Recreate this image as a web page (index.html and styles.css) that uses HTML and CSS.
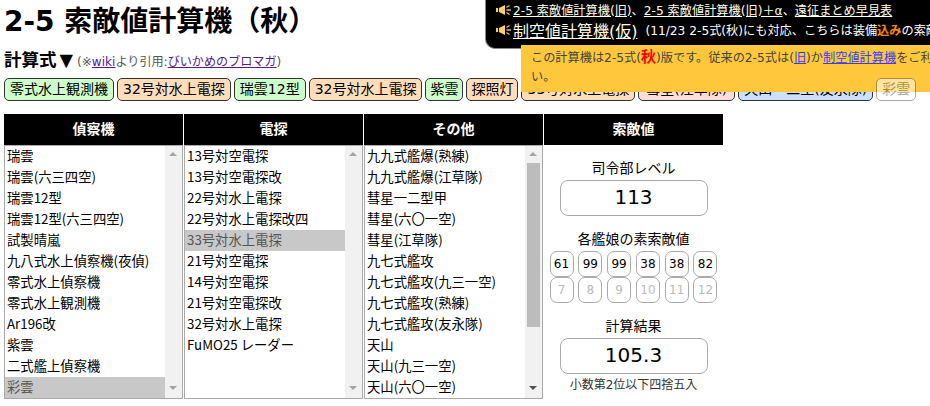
FILE: index.html
```html
<!DOCTYPE html>
<html lang="ja">
<head>
<meta charset="utf-8">
<title>2-5 索敵値計算機（秋）</title>
<link rel="stylesheet" href="styles.css">
</head>
<body>
<h1 class="title">2-5 索敵値計算機（秋）</h1>
<aside class="notice">
  <p class="notice-row"><svg class="horn" viewBox="0 0 15 10"><path d="M0 3h2v4H0zM3 3l6-3v10L3 7z"/><path class="wave" d="M10.500 2.500l3-2M10.500 5H15M10.500 7.500l3 2"/></svg><a href="#" class="notice-link">2-5 索敵値計算機(旧)</a>、<a href="#" class="notice-link">2-5 索敵値計算機(旧)＋α</a>、<a href="#" class="notice-link">遠征まとめ早見表</a></p>
  <p class="notice-row notice-row-big"><svg class="horn" viewBox="0 0 15 10"><path d="M0 3h2v4H0zM3 3l6-3v10L3 7z"/><path class="wave" d="M10.500 2.500l3-2M10.500 5H15M10.500 7.500l3 2"/></svg><a href="#" class="notice-link notice-link-big">制空値計算機(仮)</a><span class="notice-note">(11/23 2-5式(秋)にも対応、こちらは装備<b class="orange">込み</b>の索敵値を計算できます)</span></p>
</aside>
<div class="banner">この計算機は2-5式(<b class="red">秋</b>)版です。従来の2-5式は(<a href="#">旧</a>)か<a href="#">制空値計算機</a>をご利用くださ<br>い。</div>
<h2 class="formula">計算式<span class="tri">▼</span><small class="cite">(※<a href="#" class="visited">wiki</a>より引用:<a href="#" class="visited">びいかめのブロマガ</a>)</small></h2>
<div class="chips">
  <span class="chip green">零式水上観測機</span>
  <span class="chip orange-bg">32号対水上電探</span>
  <span class="chip green">瑞雲12型</span>
  <span class="chip orange-bg">32号対水上電探</span>
  <span class="chip green tight">紫雲</span>
  <span class="chip orange-bg tight">探照灯</span>
  <span class="chip orange-bg">33号対水上電探</span>
  <span class="chip pink wide">彗星(江草隊)</span>
  <span class="chip blue">天山一二型(友永隊)</span>
  <span class="chip off">彩雲</span>
</div>
<main class="board">
  <section class="col">
    <h3 class="col-head">偵察機</h3>
    <div class="list">
      <ul class="items">
        <li>瑞雲</li><li>瑞雲(六三四空)</li><li>瑞雲12型</li><li>瑞雲12型(六三四空)</li><li>試製晴嵐</li><li>九八式水上偵察機(夜偵)</li><li>零式水上偵察機</li><li>零式水上観測機</li><li>Ar196改</li><li>紫雲</li><li>二式艦上偵察機</li><li class="sel">彩雲</li>
      </ul>
      <div class="bar"><i class="up"></i><i class="track"></i><i class="down"></i></div>
    </div>
  </section>
  <section class="col">
    <h3 class="col-head">電探</h3>
    <div class="list">
      <ul class="items">
        <li>13号対空電探</li><li>13号対空電探改</li><li>22号対水上電探</li><li>22号対水上電探改四</li><li class="sel">33号対水上電探</li><li>21号対空電探</li><li>14号対空電探</li><li>21号対空電探改</li><li>32号対水上電探</li><li>FuMO25 レーダー</li>
      </ul>
      <div class="bar"><i class="up"></i><i class="track"></i><i class="down"></i></div>
    </div>
  </section>
  <section class="col">
    <h3 class="col-head">その他</h3>
    <div class="list">
      <ul class="items">
        <li>九九式艦爆(熟練)</li><li>九九式艦爆(江草隊)</li><li>彗星一二型甲</li><li>彗星(六〇一空)</li><li>彗星(江草隊)</li><li>九七式艦攻</li><li>九七式艦攻(九三一空)</li><li>九七式艦攻(熟練)</li><li>九七式艦攻(友永隊)</li><li>天山</li><li>天山(九三一空)</li><li>天山(六〇一空)</li>
      </ul>
      <div class="bar"><i class="up"></i><i class="track"><b class="thumb"></b></i><i class="down active"></i></div>
    </div>
  </section>
  <section class="col">
    <h3 class="col-head">索敵値</h3>
    <div class="calc">
      <div class="label">司令部レベル</div>
      <div class="big-box">113</div>
      <div class="label label-ships">各艦娘の素索敵値</div>
      <div class="ships">
        <span class="ship">61</span><span class="ship">99</span><span class="ship">99</span><span class="ship">38</span><span class="ship">38</span><span class="ship">82</span>
        <span class="ship dim">7</span><span class="ship dim">8</span><span class="ship dim">9</span><span class="ship dim">10</span><span class="ship dim">11</span><span class="ship dim">12</span>
      </div>
      <div class="label label-result">計算結果</div>
      <div class="big-box">105.3</div>
      <div class="foot">小数第2位以下四捨五入</div>
    </div>
  </section>
</main>
</body>
</html>
```
FILE: styles.css
```css
html, body { overflow: hidden; }
body {
  margin: 0;
  padding: 0 4px;
  width: 930px;
  height: 406px;
  box-sizing: border-box;
  position: relative;
  background: #fff;
  color: #000;
  font-family: "DejaVu Sans", "Noto Sans CJK JP", sans-serif;
  font-size: 14px;
}
.title {
  margin: 0;
  height: 44px;
  font-size: 28px;
  line-height: 44px;
  font-weight: bold;
  white-space: nowrap;
}
.notice {
  position: absolute;
  left: 485px;
  right: 0;
  top: -2px;
  height: 51px;
  box-sizing: border-box;
  overflow: hidden;
  background: #000;
  border: 1px solid #888;
  border-width: 0 0 1px 1px;
  border-radius: 0 0 0 10px;
  padding: 3px 0 0 10px;
  color: #fff;
  font-size: 12.2px;
  white-space: nowrap;
}
.notice-row { margin: 0; display: flex; align-items: center; height: 18px; }
.notice-row-big { height: 22px; }
.horn { width: 15px; height: 10px; margin-right: 2px; flex: none; fill: #ffd060; stroke: none; }
.horn .wave { fill: none; stroke: #e0b868; stroke-width: 1.3; }
.notice-link { color: #ffffe8; }
.notice-link-big { font-size: 16px; }
.notice-note { margin-left: 8px; }
.orange { color: #ff8c00; }
.banner {
  position: absolute;
  left: 521px;
  right: 0;
  top: 45px;
  height: 47px;
  box-sizing: border-box;
  overflow: hidden;
  padding: 4px 0 0 10px;
  background: #ffc83c;
  color: #444;
  font-size: 12.2px;
  line-height: 19px;
  white-space: nowrap;
}
.banner a { color: #3a3aff; }
.red { color: #f00; font-size: 15px; line-height: 15px; }
.formula {
  margin: 0;
  height: 34px;
  padding-top: 3px;
  box-sizing: border-box;
  font-size: 17.5px;
  line-height: 26px;
  font-weight: bold;
  white-space: nowrap;
}
.tri { margin-left: 3px; }
.cite { margin-left: 4px; font-size: 12.1px; font-weight: normal; color: #555; }
.visited { color: #551a8b; }
.chips { display: flex; gap: 3px; height: 23px; white-space: nowrap; }
.chip {
  box-sizing: border-box;
  height: 23px;
  padding: 0 5px;
  border: 1px solid #333;
  border-radius: 5px;
  line-height: 20px;
  font-size: 14px;
}
.tight { padding: 0 4px; }
.wide { padding: 0 7px; }
.green { background: #ccffcc; }
.orange-bg { background: #ffddbb; }
.pink { background: #ffdddd; }
.blue { background: #cce0ff; }
.off { position: relative; opacity: .5; background: #fff; color: #555; border-color: #555; }
.board {
  display: grid;
  grid-template-columns: repeat(4, 179px);
  gap: 1px;
  margin-top: 13px;
}
.col-head {
  margin: 0;
  height: 31px;
  background: #000;
  color: #fff;
  font-size: 14px;
  line-height: 31px;
  text-align: center;
}
.list {
  display: flex;
  height: 254px;
  box-sizing: border-box;
  border: 1px solid #aaa;
}
.items { flex: 1; margin: 0; padding: 0; list-style: none; overflow: hidden; }
.items li {
  height: 21px;
  line-height: 19px;
  padding-left: 2px;
  white-space: nowrap;
  font-family: "Noto Sans CJK JP", "DejaVu Sans", sans-serif;
  font-size: 13.333px;
  color: #000;
}
.items .sel { background: #c8c8c8; color: #555; }
.bar { width: 17px; flex: none; background: #f1f1f1; display: flex; flex-direction: column; align-items: center; }
.up, .down { flex: none; width: 17px; height: 17px; position: relative; }
.up::after, .down::after {
  content: "";
  position: absolute;
  left: 4px;
  border-left: 4px solid transparent;
  border-right: 4px solid transparent;
}
.up::after { top: 6px; border-bottom: 4px solid #a3a3a3; }
.down::after { top: 5px; border-top: 4px solid #a3a3a3; }
.down.active::after { border-top-color: #505050; }
.track { flex: 1; width: 13px; }
.thumb { display: block; height: 164px; background: #bcbcbc; }
.calc { display: flex; flex-direction: column; align-items: center; padding-top: 12px; }
.label { height: 23px; line-height: 23px; font-size: 14px; }
.label-ships { margin-top: 12px; }
.label-result { margin-top: 12px; }
.big-box {
  box-sizing: border-box;
  width: 148px;
  height: 36px;
  border: 1px solid #aaa;
  border-radius: 8px;
  text-align: center;
  line-height: 33px;
  font-size: 20px;
}
.ships { display: grid; grid-template-columns: repeat(6, 24px); gap: 0 4.8px; }
.ship {
  box-sizing: border-box;
  height: 26px;
  border: 1px solid #aaa;
  border-radius: 7px;
  text-align: center;
  line-height: 24px;
  font-size: 12px;
}
.dim { color: #bbb; }
.foot { margin-top: 2px; font-size: 12px; line-height: 18px; color: #333; }
```
